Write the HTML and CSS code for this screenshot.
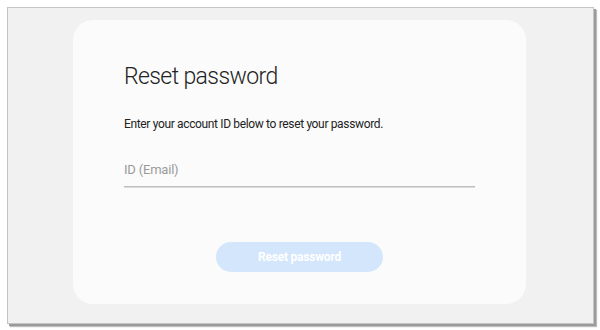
FILE: index.html
```html
<!DOCTYPE html>
<html>
<head>
<meta charset="utf-8">
<link rel="stylesheet" href="styles.css">
</head>
<body>
<div class="frame">
  <div class="card">
    <h1 class="title">Reset password</h1>
    <p class="desc">Enter your account ID below to reset your password.</p>
    <div class="field">
      <span class="placeholder">ID (Email)</span>
    </div>
    <div class="actions">
      <button class="btn">Reset password</button>
    </div>
  </div>
</div>
</body>
</html>
```
FILE: styles.css
```css
html, body {
  margin: 0;
  padding: 0;
  background: #ffffff;
}
body {
  width: 600px;
  height: 330px;
  overflow: hidden;
  font-family: Roboto, "Noto Sans", sans-serif;
}
.frame {
  box-sizing: border-box;
  margin: 7px 0 0 7px;
  width: 587px;
  height: 317px;
  border: 1px solid #c4c4c4;
  background: #f1f1f1;
  box-shadow: 2px 2px 0 #9a9a9a, 3px 3px 1px #bdbdbd;
  padding: 12px 0 0 65px;
}
.card {
  box-sizing: border-box;
  width: 453px;
  height: 284px;
  background: #fbfbfb;
  border-radius: 20px;
  padding: 0 51px;
  display: flex;
  flex-direction: column;
}
.title {
  margin: 41px 0 0 0;
  font-size: 23px;
  font-weight: 300;
  color: #222;
  line-height: 32px;
  letter-spacing: -0.6px;
}
.desc {
  margin: 22px 0 0 0;
  font-size: 12px;
  line-height: 18px;
  color: #222;
  letter-spacing: -0.35px;
}
.field {
  margin-top: 25px;
  height: 28px;
  border-bottom: 1px solid #bdbdbd;
  box-shadow: 0 1px 0 #dcdcdc;
  display: flex;
  align-items: center;
}
.placeholder {
  font-size: 13px;
  color: #9a9a9a;
  margin-top: -6px;
  letter-spacing: -0.2px;
}
.actions {
  margin-top: 55px;
  display: flex;
  justify-content: center;
}
.btn {
  width: 167px;
  height: 30px;
  border: none;
  border-radius: 15px;
  background: #d3e6fb;
  color: #ffffff;
  font-family: Roboto, "Noto Sans", sans-serif;
  font-weight: 700;
  font-size: 12px;
  letter-spacing: -0.2px;
  padding: 0;
}
```
